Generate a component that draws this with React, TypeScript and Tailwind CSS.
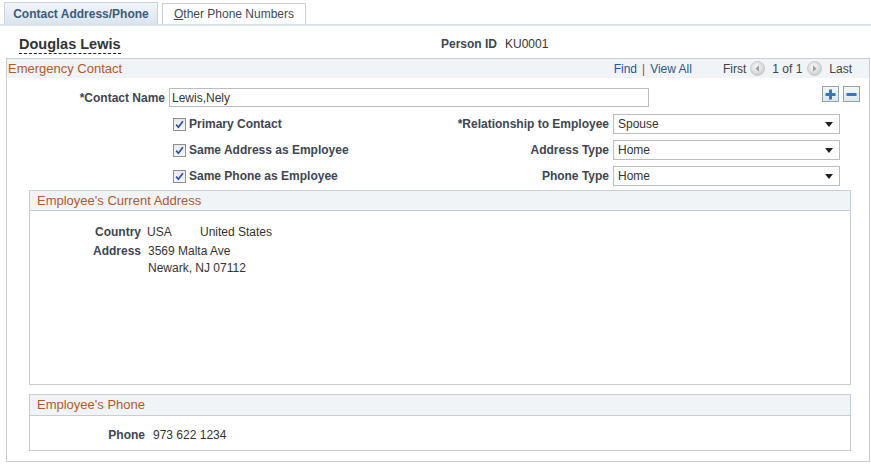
import React from "react";

const font = { fontFamily: '"Liberation Sans", Arial, sans-serif' };

function Check() {
  return (
    <span className="inline-flex h-[13px] w-[13px] items-center justify-center border border-[#8e8f93] bg-gradient-to-b from-[#e9e9ea] to-[#f7f7f7]">
      <svg width="9" height="9" viewBox="0 0 9 9">
        <path d="M1.2 4.6 L3.4 7.2 L7.9 1.2" fill="none" stroke="#2d4fa8" strokeWidth="1.7" />
      </svg>
    </span>
  );
}

function Select({ value }: { value: string }) {
  return (
    <div className="flex h-[20px] w-[227px] items-center justify-between border border-[#b9bcc0] bg-white pl-[4px] pr-[6px] text-[12px] text-[#333]">
      <span>{value}</span>
      <svg width="8" height="5" viewBox="0 0 8 5">
        <path d="M0 0 L8 0 L4 5 Z" fill="#222" />
      </svg>
    </div>
  );
}

function NavArrow({ dir }: { dir: "l" | "r" }) {
  return (
    <svg width="15" height="15" viewBox="0 0 15 15" className="inline-block">
      <defs>
        <radialGradient id={"g" + dir} cx="45%" cy="40%" r="60%">
          <stop offset="0%" stopColor="#ffffff" />
          <stop offset="100%" stopColor="#c9cbcd" />
        </radialGradient>
      </defs>
      <circle cx="7.5" cy="7.5" r="7" fill={"url(#g" + dir + ")"} stroke="#c2c4c6" strokeWidth="0.8" />
      {dir === "l" ? (
        <path d="M9 4.2 L5.4 7.5 L9 10.8 Z" fill="#9a9ca0" />
      ) : (
        <path d="M6 4.2 L9.6 7.5 L6 10.8 Z" fill="#9a9ca0" />
      )}
    </svg>
  );
}

function SquareBtn({ plus }: { plus?: boolean }) {
  return (
    <span className="inline-flex h-[16px] w-[17px] items-center justify-center border border-[#8ea3b3] bg-gradient-to-b from-[#f3f6f8] to-[#dfe7ec]">
      <svg width="11" height="11" viewBox="0 0 11 11">
        <rect x="0.5" y="4" width="10" height="3" fill="#2f78c0" />
        {plus && <rect x="4" y="0.5" width="3" height="10" fill="#2f78c0" />}
      </svg>
    </span>
  );
}

const labelCls = "text-[12px] font-bold text-[#3d4652] whitespace-nowrap";
const valCls = "text-[12px] text-[#333] whitespace-nowrap";
const titleCls = "text-[13px] text-[#b4582a]";

export default function App() {
  return (
    <div className="h-[465px] w-[871px] bg-white" style={font}>
      {/* tabs */}
      <div className="flex items-end gap-[4px] border-b-[2px] border-[#dbe4ee] pl-[4px] pt-[2px]">
        <div className="flex h-[22px] w-[154px] items-center justify-center border border-b-0 border-[#c9d3de] bg-gradient-to-b from-[#f1f5f9] to-[#dae4ee] text-[12px] font-bold text-[#3c5a7c]">
          Contact Address/Phone
        </div>
        <div className="flex h-[21px] w-[144px] items-center justify-center border border-b-0 border-[#c9ced4] bg-white text-[12px] text-[#3d4a58]">
          <span>
            <span className="underline">O</span>ther Phone Numbers
          </span>
        </div>
      </div>

      {/* person row */}
      <div className="flex h-[32px] items-center pt-[4px]">
        <div className="ml-[19px] w-[380px]">
          <span className="border-b border-dashed border-[#222] pb-[1px] text-[14.5px] font-bold text-[#333]">
            Douglas Lewis
          </span>
        </div>
        <div className="ml-[42px] flex items-center">
          <span className={labelCls}>Person ID</span>
          <span className="ml-[8px] text-[12px] text-[#333]">KU0001</span>
        </div>
      </div>

      {/* emergency contact box */}
      <div className="ml-[6px] h-[404px] w-[864px] border border-[#c8cdd2]">
        <div className="flex h-[19px] items-center bg-[#f1f4f6] pl-[1px] pr-[17px]">
          <span className={titleCls}>Emergency Contact</span>
          <div className="ml-auto flex items-center text-[12px]">
            <span className="text-[#1d56a3]">Find</span>
            <span className="mx-[5px] text-[#c0392b]">|</span>
            <span className="text-[#2f5686]">View All</span>
            <span className="ml-[31px] text-[#444]">First</span>
            <span className="ml-[4px] flex"><NavArrow dir="l" /></span>
            <span className="ml-[7px] text-[#444]">1 of 1</span>
            <span className="ml-[5px] flex"><NavArrow dir="r" /></span>
            <span className="ml-[7px] text-[#444]">Last</span>
          </div>
        </div>

        {/* contact name row */}
        <div className="flex items-start pt-[8px]">
          <div className="mt-[2px] flex h-[19px] items-center">
            <span className={labelCls + " w-[158px] text-right"}>*Contact Name</span>
            <div className="ml-[4px] flex h-[19px] w-[480px] items-center border border-[#b9bcc0] pl-[2px] text-[12px] text-[#333]">
              Lewis,Nely
            </div>
          </div>
          <div className="ml-auto mr-[9px] flex gap-[4px]">
            <SquareBtn plus />
            <SquareBtn />
          </div>
        </div>

        {/* checkbox rows */}
        <div className="mt-[7px] flex flex-col gap-[6px]">
          {[
            ["Primary Contact", "*Relationship to Employee", "Spouse"],
            ["Same Address as Employee", "Address Type", "Home"],
            ["Same Phone as Employee", "Phone Type", "Home"],
          ].map(([c, l, v]) => (
            <div key={c} className="flex h-[20px] items-center">
              <div className="ml-[166px] flex w-[256px] items-center">
                <Check />
                <span className={labelCls + " ml-[3px]"}>{c}</span>
              </div>
              <span className={labelCls + " w-[180px] text-right"}>{l}</span>
              <div className="ml-[4px]">
                <Select value={v} />
              </div>
            </div>
          ))}
        </div>

        {/* current address */}
        <div className="ml-[22px] mt-[4px] h-[195px] w-[822px] border border-[#c8cdd2]">
          <div className="flex h-[20px] items-center border-b border-[#c8cdd2] bg-[#f1f4f6] pl-[7px]">
            <span className={titleCls}>Employee's Current Address</span>
          </div>
          <div className="mt-[12px] flex items-center">
            <span className={labelCls + " w-[111px] text-right"}>Country</span>
            <span className={valCls + " ml-[6px] w-[53px]"}>USA</span>
            <span className={valCls}>United States</span>
          </div>
          <div className="mt-[2px] flex items-start">
            <span className={labelCls + " w-[111px] text-right leading-[17px]"}>Address</span>
            <div className={valCls + " ml-[7px] leading-[17px]"}>
              <div>3569 Malta Ave</div>
              <div>Newark, NJ 07112</div>
            </div>
          </div>
        </div>

        {/* phone */}
        <div className="ml-[22px] mt-[9px] h-[57px] w-[822px] border border-[#c8cdd2]">
          <div className="flex h-[21px] items-center border-b border-[#c8cdd2] bg-[#f1f4f6] pl-[7px]">
            <span className={titleCls}>Employee's Phone</span>
          </div>
          <div className="mt-[10px] flex items-center">
            <span className={labelCls + " w-[115px] text-right"}>Phone</span>
            <span className={valCls + " ml-[8px]"}>973 622 1234</span>
          </div>
        </div>
      </div>
    </div>
  );
}
